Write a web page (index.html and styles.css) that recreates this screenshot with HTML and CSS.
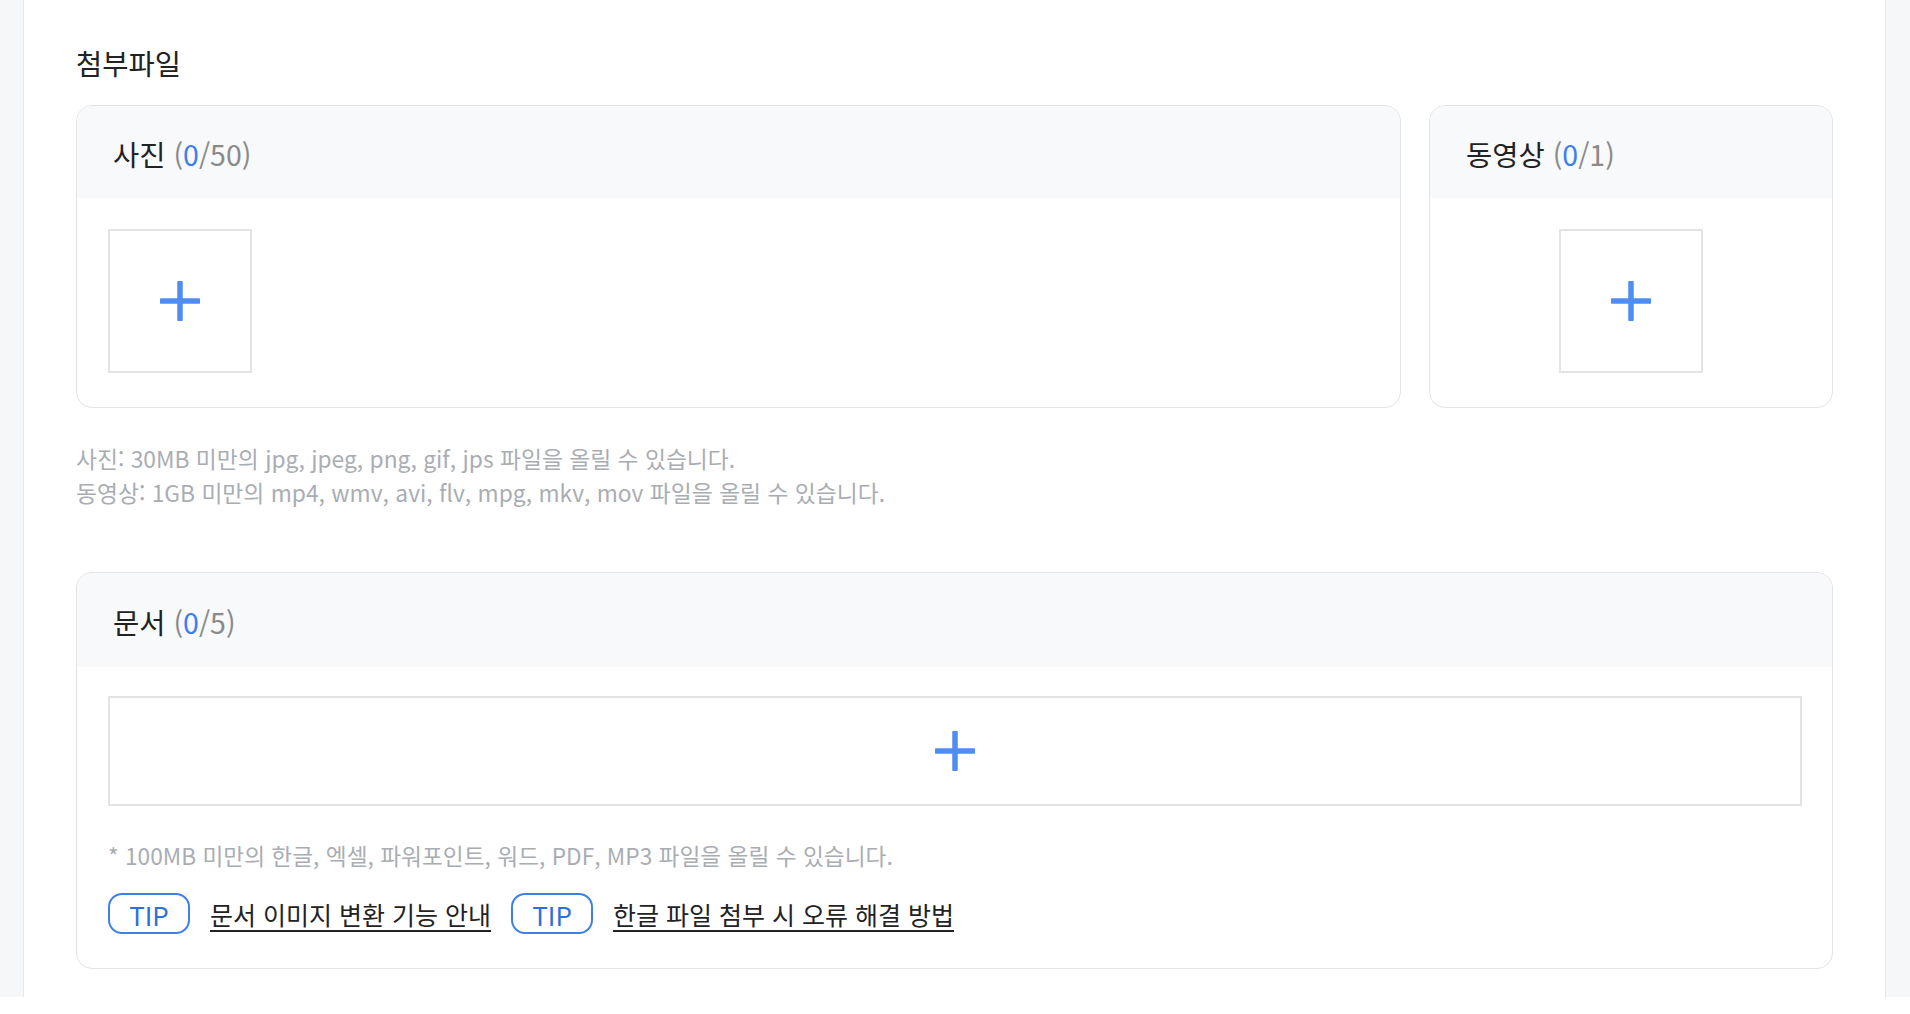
FILE: index.html
```html
<!DOCTYPE html>
<html lang="ko">
<head>
<meta charset="utf-8">
<title>첨부파일</title>
<link rel="stylesheet" href="styles.css">
</head>
<body>
<div class="page">
  <main class="panel">
    <h2 class="title">첨부파일</h2>
    <div class="media-row">
      <section class="card card-photo">
        <div class="card-head">사진 <span class="count">(<em>0</em>/50)</span></div>
        <div class="card-body">
          <button class="add-box square" type="button" aria-label="사진 추가">
            <svg width="40" height="40" viewBox="0 0 40 40"><path d="M20 1.5V38.5M1.5 20H38.5" stroke="#4f8df5" stroke-width="5.5" stroke-linecap="round"/></svg>
          </button>
        </div>
      </section>
      <section class="card card-video">
        <div class="card-head">동영상 <span class="count">(<em>0</em>/1)</span></div>
        <div class="card-body center">
          <button class="add-box square" type="button" aria-label="동영상 추가">
            <svg width="40" height="40" viewBox="0 0 40 40"><path d="M20 1.5V38.5M1.5 20H38.5" stroke="#4f8df5" stroke-width="5.5" stroke-linecap="round"/></svg>
          </button>
        </div>
      </section>
    </div>
    <div class="notes">
      <p>사진: 30MB 미만의 jpg, jpeg, png, gif, jps 파일을 올릴 수 있습니다.</p>
      <p>동영상: 1GB 미만의 mp4, wmv, avi, flv, mpg, mkv, mov 파일을 올릴 수 있습니다.</p>
    </div>
    <section class="card card-doc">
      <div class="card-head doc-head">문서 <span class="count">(<em>0</em>/5)</span></div>
      <div class="card-body doc-body">
        <button class="add-box wide" type="button" aria-label="문서 추가">
          <svg width="40" height="40" viewBox="0 0 40 40"><path d="M20 1.5V38.5M1.5 20H38.5" stroke="#4f8df5" stroke-width="5.5" stroke-linecap="round"/></svg>
        </button>
        <p class="doc-note">* 100MB 미만의 한글, 엑셀, 파워포인트, 워드, PDF, MP3 파일을 올릴 수 있습니다.</p>
        <div class="tips">
          <span class="tip">TIP</span>
          <a class="tip-link" href="#">문서 이미지 변환 기능 안내</a>
          <span class="tip">TIP</span>
          <a class="tip-link" href="#">한글 파일 첨부 시 오류 해결 방법</a>
        </div>
      </div>
    </section>
  </main>
</div>
</body>
</html>
```

FILE: styles.css
```css
* { box-sizing: border-box; }

html, body {
  margin: 0;
  padding: 0;
  background: #ffffff;
  font-family: "Noto Sans CJK KR", "Noto Sans", sans-serif;
  color: #222222;
}

.page {
  display: flex;
  background: #f6f7f9;
  height: 997px;
  padding: 0 24px 0 23px;
}

.panel {
  flex: 1;
  background: #ffffff;
  border-left: 1px solid #e6e7ea;
  border-right: 1px solid #e6e7ea;
  padding: 37px 52px 0 52px;
}

.title {
  margin: 0;
  font-size: 28.5px;
  font-weight: 400;
  line-height: 52px;
  color: #222222;
  height: 68px;
}

.media-row {
  display: flex;
  gap: 28px;
}

.card {
  border: 1px solid #e2e3e5;
  border-radius: 16px;
  overflow: hidden;
  background: #ffffff;
}

.card-photo { flex: 1; }
.card-video { width: 404px; flex: none; }

.card-head {
  height: 92px;
  background: #f8f9fa;
  padding: 0 36px;
  display: flex;
  align-items: center;
  gap: 8px;
  font-size: 28.5px;
  line-height: 1;
  color: #222222;
  padding-top: 5px;
}
.doc-head { height: 94px; }

.count { color: #8a8a8a; }
.count em { font-style: normal; color: #3c7ef0; }

.card-body {
  padding: 31px 31px 34px 31px;
  display: flex;
}
.card-body.center { justify-content: center; }

.add-box {
  border: 2px solid #e3e3e3;
  background: #ffffff;
  display: flex;
  align-items: center;
  justify-content: center;
  padding: 0;
  cursor: pointer;
}
.add-box.square { width: 144px; height: 144px; }
.add-box.wide { width: 100%; height: 110px; }

.notes {
  padding: 34px 0 62px;
}
.notes p {
  margin: 0;
  font-size: 22.8px;
  line-height: 34px;
  color: #a9adb3;
}

.doc-body {
  flex-direction: column;
  padding: 29px 30px 34px 31px;
}

.doc-note {
  margin: 35px 0 0;
  font-size: 22.7px;
  line-height: 30px;
  color: #a9adb3;
}

.tips {
  margin-top: 22px;
  display: flex;
  align-items: center;
}

.tip {
  width: 82px;
  height: 41px;
  border: 2px solid #3f7fe8;
  border-radius: 14px;
  color: #2f6fd8;
  font-size: 26px;
  display: flex;
  align-items: center;
  justify-content: center;
  line-height: 1;
  padding-top: 3px;
  margin-right: 20px;
}

.tip-link {
  color: #222222;
  font-size: 25px;
  text-decoration: underline;
  text-underline-offset: 5px;
  margin-right: 20px;
}
```
